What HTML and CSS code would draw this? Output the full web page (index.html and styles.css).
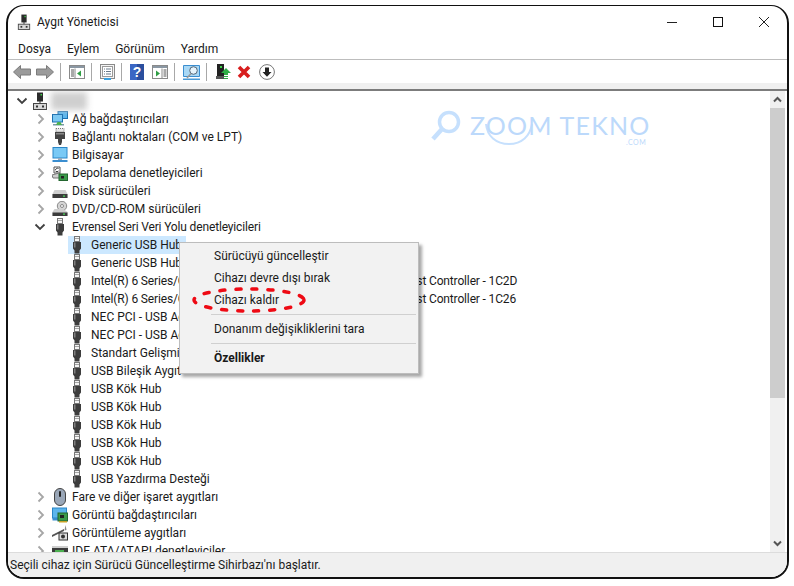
FILE: index.html
```html
<!DOCTYPE html>
<html lang="tr">
<head>
<meta charset="utf-8">
<title>Aygıt Yöneticisi</title>
<link rel="stylesheet" href="styles.css">
</head>
<body>
<svg class="defs" width="0" height="0">
  <defs>
    <symbol id="usb" viewBox="0 0 14 18">
      <rect x="4.500" y="0.500" width="5" height="5" fill="#f4f4f4" stroke="#777"/>
      <rect x="5.500" y="2" width="1" height="1" fill="#555"/><rect x="7.500" y="2" width="1" height="1" fill="#555"/>
      <path d="M3 6h8v6.500l-1.500 2v3h-5v-3L3 12.500z" fill="#3d3d3d"/>
      <rect x="4" y="6.500" width="1.500" height="5" fill="#808080"/>
    </symbol>
    <symbol id="pc" viewBox="0 0 16 18">
      <rect x="5" y="0.500" width="6" height="9" fill="#2b2b2b"/>
      <rect x="8.500" y="2" width="1.500" height="1.500" fill="#3fd04a"/>
      <rect x="7.500" y="9" width="1" height="3" fill="#333"/>
      <rect x="1.500" y="11.500" width="13" height="6" fill="#d8d8d8" stroke="#444"/>
      <rect x="4" y="13.500" width="2" height="2" fill="#333"/><rect x="10" y="13.500" width="2" height="2" fill="#333"/>
    </symbol>
    <symbol id="net" viewBox="0 0 16 16">
      <rect x="6" y="0.500" width="9.500" height="7" fill="#5cb5ec" stroke="#1b6fb0"/>
      <rect x="0.500" y="3.500" width="10" height="7.500" fill="#7cc8f2" stroke="#1b6fb0"/>
      <path d="M1 13h11v1.500H1z" fill="#7a9aa8"/><path d="M5.500 11h3l1.500 3h-6z" fill="#4cb050"/>
    </symbol>
    <symbol id="port" viewBox="0 0 14 18">
      <rect x="3" y="0.500" width="8" height="3.500" fill="#e6e6e6" stroke="#777" stroke-dasharray="1 1"/>
      <path d="M2 4h10v7H9v3l-1 3H6l-1-3v-3H2z" fill="#444"/>
      <rect x="3" y="5" width="8" height="1.500" fill="#888"/>
    </symbol>
    <symbol id="monitor" viewBox="0 0 16 16">
      <rect x="1" y="0.500" width="14" height="10.500" fill="#79c9f5" stroke="#2a86c8"/>
      <path d="M6 11h4v2H6z" fill="#9ab"/><rect x="0.500" y="13" width="15" height="2" fill="#3b8ed0"/>
    </symbol>
    <symbol id="storage" viewBox="0 0 16 16">
      <path d="M2 2h6v6H2z" fill="#fff" stroke="#555"/><path d="M3.500 5a2 2 0 0 1 3-1.500M6.500 6a2 2 0 0 1-3 0" stroke="#333" fill="none"/>
      <path d="M0 10l7-2 3 2v3H1z" fill="#cfcfcf" stroke="#777"/>
      <rect x="7" y="9" width="8.500" height="6.500" fill="#3a9a4a" stroke="#23662f"/>
      <rect x="9" y="11" width="3" height="2.500" fill="#222"/>
    </symbol>
    <symbol id="disk" viewBox="0 0 16 16">
      <path d="M2.500 7h11l2 4v4H.500v-4z" fill="#cfcfcf"/><rect x="0.500" y="11" width="15" height="4" fill="#3c3c3c"/>
      <rect x="11" y="12.500" width="2" height="1.200" fill="#4ce05a"/>
    </symbol>
    <symbol id="dvd" viewBox="0 0 16 16">
      <circle cx="10" cy="5" r="4.700" fill="#d5d5d5" stroke="#8a8a8a"/><circle cx="10" cy="5" r="1.500" fill="#fff" stroke="#888"/>
      <path d="M2.500 8h9l4 3v4H.500v-4z" fill="#cfcfcf"/><rect x="0.500" y="11.500" width="15" height="3.500" fill="#3c3c3c"/>
      <rect x="11" y="12.500" width="2" height="1.200" fill="#4ce05a"/>
    </symbol>
    <symbol id="mouse" viewBox="0 0 14 18">
      <rect x="1.500" y="0.500" width="11" height="17" rx="5.500" fill="#9aa7b8" stroke="#444"/>
      <rect x="6" y="3" width="2" height="6" rx="1" fill="#222"/>
    </symbol>
    <symbol id="gpu" viewBox="0 0 16 16">
      <rect x="0.500" y="1" width="14" height="10" fill="#5cb5ec" stroke="#2a86c8"/>
      <rect x="0.500" y="11" width="8" height="2.500" fill="#3b8ed0"/>
      <rect x="6" y="6" width="9.500" height="8" fill="#3a9a4a" stroke="#23662f"/>
      <rect x="8" y="8" width="4" height="3" fill="#222"/><path d="M7 14h8v1.500H7z" fill="#c9a227"/>
    </symbol>
    <symbol id="cam" viewBox="0 0 16 18">
      <path d="M0 11l12-6v2L0 13z" fill="#555"/>
      <path d="M13.500 1l1 5-2 .5z" fill="#888"/>
      <rect x="7" y="9" width="8.500" height="7" fill="#ddd" stroke="#333"/><circle cx="11" cy="12.500" r="2" fill="#333"/>
    </symbol>
    <symbol id="ide" viewBox="0 0 16 16">
      <rect x="0" y="3" width="16" height="10" fill="#cfcfcf"/><rect x="0" y="5" width="16" height="7" fill="#3c3c3c"/>
      <rect x="3" y="7" width="9" height="2" fill="#4cb050"/>
    </symbol>
    <symbol id="chev-r" viewBox="0 0 8 12"><path d="M1.500 1.500L6 6l-4.500 4.500" fill="none" stroke="#a6a6a6" stroke-width="1.800"/></symbol>
    <symbol id="chev-d" viewBox="0 0 12 8"><path d="M1.500 1.500L6 6l4.500-4.500" fill="none" stroke="#404040" stroke-width="1.800"/></symbol>
  </defs>
</svg>

<div class="window">
  <header class="titlebar">
    <svg class="title-icon" width="14" height="16"><use href="#pc"/></svg>
    <span class="title">Aygıt Yöneticisi</span>
    <div class="controls">
      <svg class="ctl" width="46" height="12"><path d="M18 6.500h10" stroke="#222"/></svg>
      <svg class="ctl" width="46" height="12"><rect x="18.500" y="1.500" width="9" height="9" fill="none" stroke="#111"/></svg>
      <svg class="ctl" width="46" height="12"><path d="M18 1l10 10M28 1L18 11" stroke="#222" fill="none"/></svg>
    </div>
  </header>
  <nav class="menubar">
    <span class="menu-item">Dosya</span>
    <span class="menu-item">Eylem</span>
    <span class="menu-item">Görünüm</span>
    <span class="menu-item">Yardım</span>
  </nav>
  <div class="toolbar">
    <svg class="tb tb-first" width="18" height="14" viewBox="0 0 18 14"><path d="M0.500 7L7.500 0.500V4h10v6h-10v3.500z" fill="#9b9b9b" stroke="#7b7b7b"/></svg>
    <svg class="tb" width="18" height="14" viewBox="0 0 18 14"><path d="M17.500 7L10.500 0.500V4H.500v6h10v3.500z" fill="#9b9b9b" stroke="#7b7b7b"/></svg>
    <i class="sep"></i>
    <svg class="tb" width="16" height="14" viewBox="0 0 16 14"><rect x=".5" y=".5" width="15" height="13" fill="#fff" stroke="#8a8a8a"/><rect x="1" y="1" width="14" height="2" fill="#8a97a3"/><path d="M6 3.500v10" stroke="#8a8a8a"/><path d="M2 5h3M2 7h3M2 9h3M2 11h3" stroke="#555"/><path d="M12 5.500v6L8 8.500z" fill="#2f9e44"/></svg>
    <i class="sep"></i>
    <svg class="tb" width="15" height="16" viewBox="0 0 15 16"><rect x=".5" y=".5" width="14" height="14" fill="#f4f4f4" stroke="#8a8a8a"/><rect x="2.500" y="2.500" width="10" height="10" fill="#fff" stroke="#9a9a9a"/><path d="M4 5h1M6 5h5M4 7.500h1M6 7.500h5M4 10h1M6 10h5" stroke="#6a7a8a"/><rect x="4" y="14" width="7" height="2" fill="#3aa0e0"/></svg>
    <i class="sep"></i>
    <svg class="tb" width="14" height="16" viewBox="0 0 14 16"><rect width="14" height="16" fill="#2b4f9e"/><rect x="0" y="0" width="7" height="16" fill="#3b67c4"/><text x="7" y="13" class="help-q">?</text></svg>
    <svg class="tb tb-wide" width="16" height="14" viewBox="0 0 16 14"><rect x=".5" y=".5" width="15" height="13" fill="#fff" stroke="#8a8a8a"/><rect x="1" y="1" width="14" height="2" fill="#8a97a3"/><path d="M10 3.500v10" stroke="#8a8a8a"/><path d="M11.500 5h3M11.500 7h3M11.500 9h3M11.500 11h3" stroke="#555"/><path d="M4 5.500v6l4-3z" fill="#2f9e44"/></svg>
    <i class="sep"></i>
    <svg class="tb" width="17" height="15" viewBox="0 0 17 15"><path d="M.5 11.500V.5h16v11z" fill="#a9d8f5" stroke="#3b8ed0"/><rect x="0" y="13.500" width="17" height="1.500" fill="#4a9ad6"/><circle cx="10.500" cy="5.500" r="3.800" fill="#e6f4fc" stroke="#567"/><path d="M8 8.500l-4 4.500" stroke="#999" stroke-width="1.500"/></svg>
    <i class="sep"></i>
    <svg class="tb tb-pc" width="16" height="16" viewBox="0 0 16 16"><rect x="2" y="0" width="7" height="12" fill="#222"/><rect x="5" y="2" width="2" height="2" fill="#3fd04a"/><rect x="1" y="12" width="8" height="3" fill="#555"/><path d="M11 4l5 5h-3v2H9V9H6z" fill="#2fae46"/><path d="M9 12h4v1H9zM9 14h4v1H9z" fill="#2fae46"/></svg>
    <svg class="tb tb-x" width="14" height="14" viewBox="0 0 14 14"><path d="M2 2l10 10M12 2L2 12" stroke="#d81e1e" stroke-width="3.600"/></svg>
    <svg class="tb tb-dl" width="16" height="16" viewBox="0 0 16 16"><circle cx="8" cy="8" r="7.400" fill="#fff" stroke="#777"/><path d="M6 3.500h4V8h2.500L8 12.700 3.500 8H6z" fill="#222"/></svg>
  </div>
  <div class="band"></div>
  <div class="content">
    <div class="tree">
      <div class="row lvl0"><svg class="chev-d" width="12" height="8"><use href="#chev-d"/></svg><svg class="ico" width="16" height="18"><use href="#pc"/></svg><span class="blur"></span></div>
      <div class="row lvl1"><svg class="chev" width="8" height="12"><use href="#chev-r"/></svg><svg class="ico" width="16" height="16"><use href="#net"/></svg><span>Ağ bağdaştırıcıları</span></div>
      <div class="row lvl1"><svg class="chev" width="8" height="12"><use href="#chev-r"/></svg><svg class="ico" width="16" height="18"><use href="#port"/></svg><span>Bağlantı noktaları (COM ve LPT)</span></div>
      <div class="row lvl1"><svg class="chev" width="8" height="12"><use href="#chev-r"/></svg><svg class="ico" width="16" height="16"><use href="#monitor"/></svg><span>Bilgisayar</span></div>
      <div class="row lvl1"><svg class="chev" width="8" height="12"><use href="#chev-r"/></svg><svg class="ico" width="16" height="16"><use href="#storage"/></svg><span>Depolama denetleyicileri</span></div>
      <div class="row lvl1"><svg class="chev" width="8" height="12"><use href="#chev-r"/></svg><svg class="ico" width="16" height="16"><use href="#disk"/></svg><span>Disk sürücüleri</span></div>
      <div class="row lvl1"><svg class="chev" width="8" height="12"><use href="#chev-r"/></svg><svg class="ico" width="16" height="16"><use href="#dvd"/></svg><span>DVD/CD-ROM sürücüleri</span></div>
      <div class="row lvl1"><svg class="chev-d" width="12" height="8"><use href="#chev-d"/></svg><svg class="ico" width="16" height="18"><use href="#usb"/></svg><span class="tight">Evrensel Seri Veri Yolu denetleyicileri</span></div>
      <div class="row lvl2 selected"><svg class="ico" width="16" height="18"><use href="#usb"/></svg><span>Generic USB Hub</span></div>
      <div class="row lvl2"><svg class="ico" width="16" height="18"><use href="#usb"/></svg><span>Generic USB Hub</span></div>
      <div class="row lvl2"><svg class="ico" width="16" height="18"><use href="#usb"/></svg><span class="tight">Intel(R) 6 Series/C200 Series Chipset Family USB Enhanced Host Controller - 1C2D</span></div>
      <div class="row lvl2"><svg class="ico" width="16" height="18"><use href="#usb"/></svg><span class="tight">Intel(R) 6 Series/C200 Series Chipset Family USB Enhanced Host Controller - 1C26</span></div>
      <div class="row lvl2"><svg class="ico" width="16" height="18"><use href="#usb"/></svg><span>NEC PCI - USB Açık Ana Bilgisayar</span></div>
      <div class="row lvl2"><svg class="ico" width="16" height="18"><use href="#usb"/></svg><span>NEC PCI - USB Açık Ana Bilgisayar</span></div>
      <div class="row lvl2"><svg class="ico" width="16" height="18"><use href="#usb"/></svg><span>Standart Gelişmiş PCI - USB</span></div>
      <div class="row lvl2"><svg class="ico" width="16" height="18"><use href="#usb"/></svg><span>USB Bileşik Aygıt</span></div>
      <div class="row lvl2"><svg class="ico" width="16" height="18"><use href="#usb"/></svg><span>USB Kök Hub</span></div>
      <div class="row lvl2"><svg class="ico" width="16" height="18"><use href="#usb"/></svg><span>USB Kök Hub</span></div>
      <div class="row lvl2"><svg class="ico" width="16" height="18"><use href="#usb"/></svg><span>USB Kök Hub</span></div>
      <div class="row lvl2"><svg class="ico" width="16" height="18"><use href="#usb"/></svg><span>USB Kök Hub</span></div>
      <div class="row lvl2"><svg class="ico" width="16" height="18"><use href="#usb"/></svg><span>USB Kök Hub</span></div>
      <div class="row lvl2"><svg class="ico" width="16" height="18"><use href="#usb"/></svg><span>USB Yazdırma Desteği</span></div>
      <div class="row lvl1"><svg class="chev" width="8" height="12"><use href="#chev-r"/></svg><svg class="ico" width="16" height="18"><use href="#mouse"/></svg><span>Fare ve diğer işaret aygıtları</span></div>
      <div class="row lvl1"><svg class="chev" width="8" height="12"><use href="#chev-r"/></svg><svg class="ico" width="16" height="16"><use href="#gpu"/></svg><span>Görüntü bağdaştırıcıları</span></div>
      <div class="row lvl1"><svg class="chev" width="8" height="12"><use href="#chev-r"/></svg><svg class="ico" width="16" height="18"><use href="#cam"/></svg><span>Görüntüleme aygıtları</span></div>
      <div class="row lvl1"><svg class="chev" width="8" height="12"><use href="#chev-r"/></svg><svg class="ico" width="16" height="16"><use href="#ide"/></svg><span>IDE ATA/ATAPI denetleyiciler</span></div>
    </div>
    <div class="scrollbar">
      <svg class="arrow" width="15" height="17" viewBox="0 0 15 17"><path d="M4 10.500l3.500-3.500 3.500 3.500" fill="none" stroke="#555" stroke-width="2"/></svg>
      <div class="thumb"></div>
      <svg class="arrow arrow-down" width="15" height="17" viewBox="0 0 15 17"><path d="M4 6.500l3.500 3.500 3.500-3.500" fill="none" stroke="#555" stroke-width="2"/></svg>
    </div>
  </div>
  <footer class="status">Seçili cihaz için Sürücü Güncelleştirme Sihirbazı'nı başlatır.</footer>

  <div class="watermark">
    <svg class="wm-lens" width="32" height="32" viewBox="0 0 32 32"><circle cx="19" cy="12" r="9.500" fill="none" stroke="#c6e0fd" stroke-width="3.500"/><path d="M12 19L3 29" stroke="#c6e0fd" stroke-width="4.500"/></svg>
    <svg class="wm-arc" width="50" height="24" viewBox="0 0 50 24"><path d="M2 2c1 12 10 20 23 20s21-8 23-20" fill="none" stroke="#c6e0fd" stroke-width="2"/></svg>
    <span class="wm-text">ZOOM TEKNO</span>
    <span class="wm-com">.COM</span>
  </div>

  <div class="context">
    <div class="ctx-item">Sürücüyü güncelleştir</div>
    <div class="ctx-item">Cihazı devre dışı bırak</div>
    <div class="ctx-item">Cihazı kaldır</div>
    <hr class="ctx-sep">
    <div class="ctx-item">Donanım değişikliklerini tara</div>
    <hr class="ctx-sep">
    <div class="ctx-item ctx-bold">Özellikler</div>
  </div>
  <svg class="ring" width="116" height="28" viewBox="0 0 116 28"><ellipse cx="58" cy="14" rx="55" ry="11" fill="none" stroke="#ee0a14" stroke-width="3.500" stroke-linecap="round" stroke-dasharray="5 11"/></svg>
</div>
</body>
</html>
```
FILE: styles.css
```css
* { box-sizing: border-box; }
html, body { margin: 0; padding: 0; background: #fff; }
body {
  width: 794px;
  height: 586px;
  overflow: hidden;
  font-family: Roboto, "Noto Sans", sans-serif;
  font-size: 12px;
  color: #1a1a1a;
  padding: 5px 5px 7px 6px;
}
.defs { position: absolute; }

.window {
  position: relative;
  width: 783px;
  height: 574px;
  background: #fff;
  border: solid #111;
  border-width: 1px 2px 2px 2px;
  border-radius: 18px;
  overflow: hidden;
  display: flex;
  flex-direction: column;
}

.titlebar { height: 32px; display: flex; align-items: center; padding-left: 9px; flex: none; }
.title-icon { flex: none; }
.title { margin-left: 6px; }
.controls { margin-left: auto; display: flex; margin-right: 0; }
.ctl { display: block; }

.menubar { display: flex; align-items: center; gap: 16px; padding-left: 10px; border-bottom: 1px solid #bdbdbd; flex: none; height: 22px; }

.toolbar { height: 23px; display: flex; align-items: center; flex: none; padding: 1px 0 0 5px; }
.tb { flex: none; display: block; margin-left: 5px; }
.tb-first { margin-left: 0; }
.tb-wide { margin-left: 8px; }
.tb-pc { margin-left: 6px; }
.tb-x { margin-left: 6px; }
.tb-dl { margin-left: 8px; }
.sep { width: 1px; height: 18px; background: #a8a8a8; margin: 0 8px 0 6px; flex: none; }
.sep + .tb { margin-left: 0; }
.help-q { font-family: "Liberation Sans", sans-serif; font-size: 14px; font-weight: 700; fill: #fff; text-anchor: middle; }

.band { height: 8px; background: #f0f0f0; border-bottom: 2px solid #7c7c7c; flex: none; }

.content { flex: 1; min-height: 0; display: flex; }
.tree { flex: 1; min-width: 0; overflow: hidden; padding-top: 1px; }
.row { height: 18px; display: flex; align-items: center; white-space: nowrap; line-height: 18px; }
.lvl0 { padding-left: 8px; }
.lvl1 { padding-left: 28px; }
.lvl2 { padding-left: 61px; }
.chev { flex: none; margin: 0 8px 0 1px; }
.chev-d { flex: none; margin: 0 6px 0 -2px; }
.lvl0 .chev-d { margin: 0 4px 0 0; }
.ico { flex: none; margin: 0 4px 0 -1px; }
.lvl0 .ico { margin: 0 3px 0 0; }
.lvl1 .chev-d + .ico { margin-left: 0; }
.lvl2 .ico { margin: 0 6px 0 0; }
.tight { letter-spacing: -.15px; }
.selected { position: relative; }
.selected::before { content: ""; position: absolute; left: 60px; top: 0; width: 118px; height: 18px; background: #cce8ff; }
.selected .ico, .selected span { position: relative; }
.blur { width: 36px; height: 18px; background: #cfcfcf; filter: blur(3px); }

.scrollbar { width: 15px; margin-right: 2px; background: #f0f0f0; flex: none; display: flex; flex-direction: column; }
.arrow { display: block; flex: none; }
.thumb { height: 290px; background: #cdcdcd; flex: none; }
.arrow-down { margin-top: auto; }

.status { height: 25px; flex: none; background: #f0f0f0; border-top: 1px solid #dcdcdc; padding-left: 2px; line-height: 25px; white-space: nowrap; }

.watermark { position: absolute; left: 422px; top: 104px; width: 240px; height: 40px; pointer-events: none; }
.wm-lens { position: absolute; left: 0; top: 0; }
.wm-arc { position: absolute; left: 54px; top: 12px; }
.wm-text { position: absolute; left: 40px; top: 0; font-family: Lato, sans-serif; font-size: 25px; font-weight: 400; letter-spacing: 1.2px; color: #bcd9fb; white-space: nowrap; }
.wm-com { position: absolute; left: 196px; top: 28px; font-family: Lato, sans-serif; font-size: 7px; letter-spacing: .5px; color: #bcd9fb; }

.context {
  position: absolute;
  left: 171px;
  top: 236px;
  width: 240px;
  height: 132px;
  background: #f2f2f2;
  border: 1px solid #bdbdbd;
  box-shadow: 3px 3px 3px rgba(0, 0, 0, .35);
  padding: 2px;
}
.ctx-item { height: 22px; line-height: 22px; padding-left: 32px; white-space: nowrap; }
.ctx-sep { border: 0; border-top: 1px solid #d0d0d0; margin: 3px 0 3px 29px; height: 1px; }
.ctx-bold { font-weight: 700; }
.ring { position: absolute; left: 183px; top: 280px; }
```
